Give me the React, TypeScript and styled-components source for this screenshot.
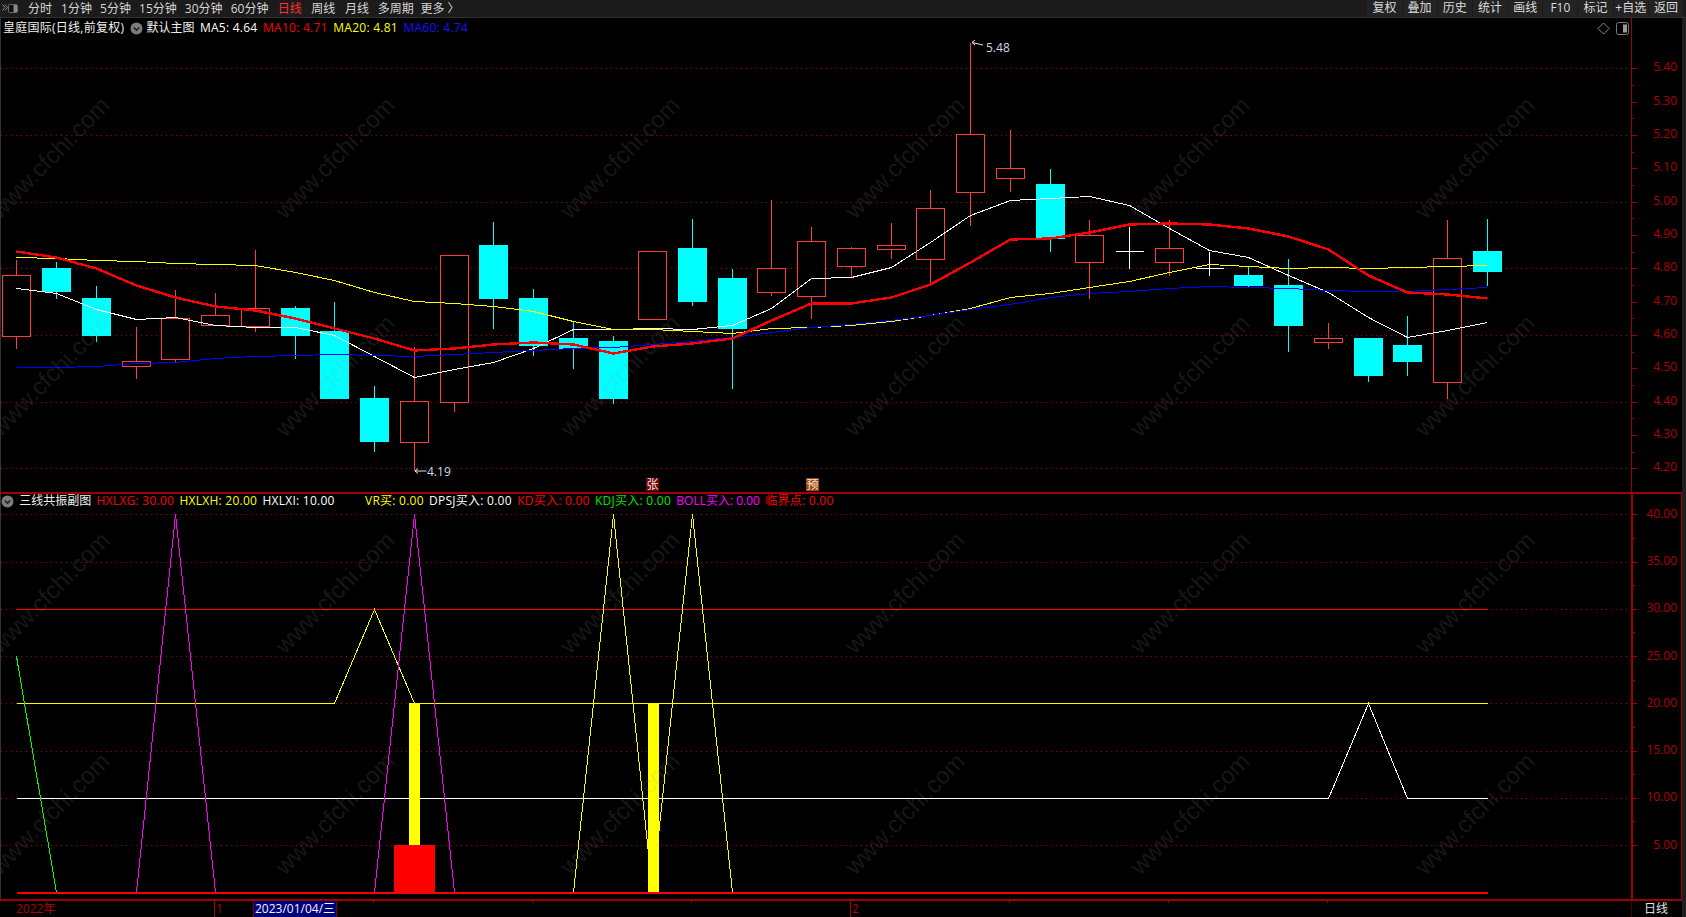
import React from "react";
import styled, { createGlobalStyle } from "styled-components";

const FONT = `"Open Sans","Noto Sans CJK SC",sans-serif`;

const Global = createGlobalStyle`
  html, body { margin: 0; padding: 0; background: #000; overflow: hidden; }
  #root { width: 1686px; height: 917px; }
`;

const Page = styled.div`
  width: 1686px;
  height: 917px;
  display: flex;
  flex-direction: column;
  background: #000;
  font: 12px/16px ${FONT};
  color: #e0e0e0;
  overflow: hidden;
`;

const TopBar = styled.header`
  height: 18px;
  box-sizing: border-box;
  display: flex;
  align-items: stretch;
  justify-content: space-between;
  background: #1b1b1b;
  border-bottom: 1px solid #303030;
`;
const Nav = styled.nav`
  display: flex;
  align-items: center;
  gap: 8.1px;
  padding-left: 2px;
`;
const NavLogo = styled.svg`
  width: 16px;
  height: 11px;
  margin-right: 1.9px;
`;
const NavItem = styled.span<{ $active?: boolean; $before?: number }>`
  color: ${(p) => (p.$active ? "#ff3030" : "#d6d6d6")};
  margin-left: ${(p) => p.$before ?? 0}px;
  white-space: nowrap;
`;
const Actions = styled.div`
  display: flex;
  padding-right: 3px;
`;
const ActionButton = styled.span`
  width: 34.2px;
  margin-left: 1px;
  background: #232323;
  color: #dcdcdc;
  text-align: center;
  white-space: nowrap;
  line-height: 16px;
`;

const Body = styled.div`
  flex: 1;
  display: flex;
  min-height: 0;
`;
const Column = styled.div`
  flex: 1;
  display: flex;
  flex-direction: column;
`;
const Gutter = styled.div`
  width: 4px;
  background: #1f1f1f;
`;

const MainPane = styled.section`
  height: 474px;
  display: flex;
`;
const SubPane = styled.section`
  height: 409px;
  box-sizing: border-box;
  display: flex;
  border-top: 2px solid #a00000;
  border-bottom: 2px solid #a00000;
  border-right: 1px solid #a00000;
`;
const Plot = styled.div`
  position: relative;
  width: 1631px;
  box-sizing: border-box;
  border-left: 1px solid #333;
  flex: none;
`;
const PlotSvg = styled.svg`
  display: block;
  width: 100%;
  height: 100%;
`;
const Axis = styled.div<{ $thick?: boolean }>`
  flex: 1;
  border-left: ${(p) => (p.$thick ? 2 : 1)}px solid #a00000;
`;
const AxisSvg = styled.svg`
  display: block;
  width: 100%;
  height: 100%;
`;
const AxisLabel = styled.text`
  fill: #b00000;
  font: 12px ${FONT};
  text-anchor: end;
  dominant-baseline: central;
`;
const Tick = styled.line`
  stroke: #a00000;
  stroke-width: 1;
  shape-rendering: crispEdges;
`;
const GridLine = styled.line`
  stroke: #a80000;
  stroke-width: 1;
  stroke-dasharray: 1 4;
  shape-rendering: crispEdges;
`;
const Wick = styled.line<{ $color: string }>`
  stroke: ${(p) => p.$color};
  stroke-width: 1;
  shape-rendering: crispEdges;
`;
const Body3 = styled.rect<{ $color: string; $solid?: boolean }>`
  stroke: ${(p) => p.$color};
  fill: ${(p) => (p.$solid ? p.$color : "#000")};
  stroke-width: 1;
  shape-rendering: crispEdges;
`;
const Curve = styled.polyline<{ $color: string; $width?: number }>`
  fill: none;
  stroke: ${(p) => p.$color};
  stroke-width: ${(p) => p.$width ?? 1};
  shape-rendering: crispEdges;
`;
const Solid = styled.rect<{ $color: string }>`
  fill: ${(p) => p.$color};
  shape-rendering: crispEdges;
`;
const Watermark = styled.text`
  fill: #9a9a9a;
  opacity: 0.14;
  font: 24px "Liberation Sans", sans-serif;
`;
const PriceNote = styled.text`
  fill: #cfd8e6;
  font: 12px ${FONT};
  dominant-baseline: central;
`;
const NoteArrow = styled.path`
  fill: none;
  stroke: #e8e8e8;
  stroke-width: 1;
`;
const SignalChip = styled.rect<{ $color: string }>`
  fill: ${(p) => p.$color};
`;
const SignalText = styled.text`
  fill: #ececec;
  font: 12px ${FONT};
  text-anchor: middle;
  dominant-baseline: central;
`;

const Legend = styled.div<{ $h: number; $left: number; $gap: number }>`
  position: absolute;
  left: ${(p) => p.$left}px;
  top: 0;
  height: ${(p) => p.$h}px;
  line-height: ${(p) => p.$h}px;
  display: flex;
  align-items: center;
  gap: ${(p) => p.$gap}px;
  white-space: nowrap;
`;
const LegendItem = styled.span<{ $color: string; $before?: number; $spaced?: boolean }>`
  color: ${(p) => p.$color};
  margin-left: ${(p) => p.$before ?? 0}px;
  letter-spacing: ${(p) => (p.$spaced ? 0.25 : 0)}px;
`;
const Chevron = styled.svg`
  width: 13px;
  height: 13px;
  flex: none;
`;
const PaneTools = styled.div`
  position: absolute;
  right: 2px;
  top: 4px;
  display: flex;
  align-items: center;
  gap: 6px;
`;
const ToolIcon = styled.svg`
  width: 13px;
  height: 13px;
  display: block;
`;

const TimeBar = styled.footer`
  flex: 1;
  display: flex;
`;
const TimeTrack = styled.div`
  position: relative;
  width: 1631px;
  flex: none;
`;
const TimeMark = styled.span<{ $x: number }>`
  position: absolute;
  left: ${(p) => p.$x}px;
  top: 0;
  color: #b00000;
  line-height: 15px;
  white-space: nowrap;
`;
const TimeTick = styled.i<{ $x: number; $major?: boolean }>`
  position: absolute;
  left: ${(p) => p.$x}px;
  top: 0;
  width: 1px;
  height: ${(p) => (p.$major ? 16 : 2)}px;
  background: #a00000;
`;
const Cursor = styled.span`
  position: absolute;
  left: 253px;
  top: 0;
  width: 84px;
  height: 16px;
  box-sizing: border-box;
  border-left: 1px solid #800000;
  border-right: 1px solid #800000;
  background: #00007c;
  color: #f4f4f4;
  line-height: 15px;
  padding-left: 1px;
  white-space: nowrap;
`;
const TimeCell = styled.div`
  flex: 1;
  border-left: 1px solid #4a0000;
  text-align: center;
  color: #e0e0e0;
  line-height: 16px;
  padding-right: 2px;
`;

const RED = "#ff3c3c";
const CYAN = "#00ffff";
const WHITE = "#ffffff";
const cx = (i: number) => Math.round(16.4 + 39.74 * i) + 0.5;
const snap = (v: number) => Math.round(v) + 0.5;

type C = [string, number, number, number, number];
// kind, wick top, body top, body bottom, wick bottom (page pixels)
const CANDLES: C[] = [
  ["r", 259, 275, 336, 348], ["c", 261, 268, 291, 298], ["c", 285, 298, 335, 341], ["r", 326, 361, 366, 378],
  ["r", 289, 318, 359, 361], ["r", 292, 315, 325, 325], ["r", 249, 308, 326, 331], ["c", 305, 308, 335, 358],
  ["c", 301, 331, 398, 398], ["c", 385, 398, 441, 451], ["r", 346, 401, 442, 470], ["r", 255, 255, 402, 411],
  ["c", 221, 245, 298, 328], ["c", 288, 298, 345, 355], ["c", 321, 338, 348, 368], ["c", 335, 341, 398, 403],
  ["r", 251, 251, 319, 319], ["c", 218, 248, 301, 305], ["c", 268, 278, 328, 388], ["r", 199, 268, 292, 295],
  ["r", 226, 241, 296, 318], ["r", 246, 248, 266, 277], ["r", 222, 245, 249, 258], ["r", 189, 208, 259, 284],
  ["r", 42, 134, 192, 225], ["r", 129, 168, 178, 191], ["c", 168, 184, 238, 251], ["r", 219, 235, 262, 298],
  ["w", 226, 251, 251, 268], ["r", 219, 248, 262, 275], ["w", 251, 268, 268, 275], ["c", 266, 275, 285, 287],
  ["c", 258, 285, 325, 351], ["r", 322, 338, 342, 348], ["c", 338, 338, 375, 381], ["c", 315, 345, 361, 375],
  ["r", 219, 258, 382, 398], ["c", 218, 251, 271, 285],
];

const MA5 = [288, 293, 309, 319, 317, 325, 327, 327, 335, 356, 377, 369, 362, 348, 329, 329, 328, 329, 325, 308, 278, 277, 267, 242, 215, 200, 198, 196, 205, 228, 250, 257, 275, 292, 317, 337, 330, 322];
const MA10 = [251, 257, 268, 285, 297, 306, 310, 318, 328, 338, 350, 348, 344, 342, 344, 353, 346, 343, 338, 320, 303, 303, 297, 284, 262, 239, 238, 232, 224, 223, 224, 228, 236, 249, 275, 292, 294, 298];
const MA20 = [257, 258, 260, 261, 263, 264, 265, 272, 280, 292, 301, 303, 306, 311, 321, 329, 329, 331, 333, 328, 327, 325, 321, 315, 308, 297, 293, 287, 281, 272, 264, 266, 268, 267, 268, 267, 266, 265];
const MA60 = [367, 367, 366, 363, 362, 358, 356, 355, 354, 355, 356, 354, 352, 350, 348, 347, 344, 341, 337, 332, 327, 324, 320, 315, 309, 304, 297, 293, 291, 288, 286, 287, 288, 290, 291, 291, 289, 287];

const points = (ys: number[]) => ys.map((y, i) => `${cx(i)},${snap(y)}`).join(" ");
const V = (v: number) => 892.3 - 9.45 * v;
const series = (vals: [number, number][]) => vals.map(([i, v]) => `${cx(i)},${snap(V(v))}`).join(" ");

const PRICE_TICKS = [5.4, 5.3, 5.2, 5.1, 5.0, 4.9, 4.8, 4.7, 4.6, 4.5, 4.4, 4.3, 4.2];
const P = (p: number) => 68.3 + (5.4 - p) * 333.3;
const MINOR = [5.35, 5.25, 5.15, 5.05, 4.95, 4.85, 4.75, 4.65, 4.55, 4.45, 4.35, 4.25];
const SUB_TICKS = [40, 35, 30, 25, 20, 15, 10, 5];

function WatermarkRow({ rows }: { rows: number[] }) {
  return (
    <>
      {rows.flatMap((endY) =>
        [0, 1, 2, 3, 4, 5].map((k) => {
          const x = 112 + 285 * k - 112;
          const y = endY + 118;
          return (
            <Watermark key={`${endY}-${k}`} x={x} y={y} transform={`rotate(-45.5 ${x} ${y})`}>
              www.cfchi.com
            </Watermark>
          );
        })
      )}
    </>
  );
}

function CircleChevron() {
  return (
    <Chevron viewBox="0 0 13 13">
      <circle cx="6.5" cy="6.5" r="6" fill="#7c7c7c" />
      <path d="M3.8 5.4 L6.5 8.2 L9.2 5.4" fill="none" stroke="#1c1c1c" strokeWidth="1.5" />
    </Chevron>
  );
}

const MAJOR_TICKS = [214, 850];
const MINOR_TICKS = [373, 532, 691, 1009, 1168, 1327];

export default function App() {
  return (
    <Page>
      <Global />
      <TopBar>
        <Nav>
          <NavLogo viewBox="0 0 16 11">
            <path d="M0.5 1.5 L3 4.5 L0.5 7.5 M3 1.5 L5.5 4.5 L3 7.5" fill="none" stroke="#8a8a8a" strokeWidth="1" />
            <rect x="6.5" y="1.5" width="9" height="8" rx="1" fill="#111" stroke="#6a6a6a" />
            <rect x="11.5" y="2" width="3.5" height="7" fill="#8a8a8a" />
          </NavLogo>
          <NavItem>分时</NavItem>
          <NavItem $before={1}>1分钟</NavItem>
          {["5分钟", "15分钟", "30分钟", "60分钟"].map((t) => (
            <NavItem key={t}>{t}</NavItem>
          ))}
          <NavItem $active $before={1.2}>日线</NavItem>
          <NavItem $before={1.5}>周线</NavItem>
          <NavItem $before={1.7}>月线</NavItem>
          <NavItem $before={0.5}>多周期</NavItem>
          <NavItem $before={-1.4}>更多 〉</NavItem>
        </Nav>
        <Actions>
          {["复权", "叠加", "历史", "统计", "画线", "F10", "标记", "+自选", "返回"].map((t) => (
            <ActionButton key={t}>{t}</ActionButton>
          ))}
        </Actions>
      </TopBar>
      <Body>
        <Column>
          <MainPane>
            <Plot>
              <PlotSvg viewBox="1 18 1630 474">
                {[5.4, 5.2, 5.0, 4.8, 4.6, 4.4, 4.2].map((p) => (
                  <GridLine key={p} x1="1" x2="1631" y1={snap(P(p))} y2={snap(P(p))} />
                ))}
                {CANDLES.map(([k, wt, bt, bb, wb], i) => {
                  const x = cx(i);
                  if (k === "w") {
                    return (
                      <g key={i}>
                        <Wick $color={WHITE} x1={x} x2={x} y1={wt + 0.5} y2={wb + 0.5} />
                        <Wick $color={WHITE} x1={x - 14} x2={x + 14} y1={bt + 0.5} y2={bt + 0.5} />
                      </g>
                    );
                  }
                  const color = k === "r" ? RED : CYAN;
                  return (
                    <g key={i}>
                      <Wick $color={color} x1={x} x2={x} y1={wt + 0.5} y2={wb + 0.5} />
                      <Body3 $color={color} $solid={k === "c"} x={x - 14} y={bt + 0.5} width={28} height={bb - bt} />
                    </g>
                  );
                })}
                <Curve $color="#ffffff" points={points(MA5)} />
                <Curve $color="#ffff00" points={points(MA20)} />
                <Curve $color="#0000ff" points={points(MA60)} />
                <Curve $color="#ff0000" $width={2.4} points={points(MA10)} />
                <NoteArrow d="M983 45 L972 42.5 M975 40 L972 42.5 L975 45" />
                <PriceNote x="986" y="47">5.48</PriceNote>
                <NoteArrow d="M426.5 471 L415 471 M418 468.5 L415 471 L418 473.5" />
                <PriceNote x="427" y="471">4.19</PriceNote>
                <SignalChip $color="#7a0000" x="646" y="478" width="13" height="13" />
                <SignalText x="652.5" y="484.5">张</SignalText>
                <SignalChip $color="#a8420a" x="806" y="478" width="13" height="13" />
                <SignalText x="812.5" y="484.5">预</SignalText>
                <WatermarkRow rows={[102, 320]} />
              </PlotSvg>
              <Legend $h={20} $left={2} $gap={5.6}>
                <LegendItem $color="#f0f0f0" $spaced>皇庭国际(日线,前复权)</LegendItem>
                <CircleChevron />
                <LegendItem $color="#f0f0f0" $before={-2}>默认主图</LegendItem>
                <LegendItem $color="#ffffff" $spaced>MA5: 4.64</LegendItem>
                <LegendItem $color="#ff0000" $spaced>MA10: 4.71</LegendItem>
                <LegendItem $color="#ffff00" $spaced>MA20: 4.81</LegendItem>
                <LegendItem $color="#1414ff" $spaced>MA60: 4.74</LegendItem>
              </Legend>
              <PaneTools>
                <ToolIcon viewBox="0 0 13 13">
                  <path d="M6.5 1 L12 6.5 L6.5 12 L1 6.5 Z" fill="none" stroke="#8c8c8c" strokeWidth="1" />
                </ToolIcon>
                <ToolIcon viewBox="0 0 13 13">
                  <rect x="0.5" y="0.5" width="12" height="12" rx="2" fill="#000" stroke="#7a7a7a" />
                  <rect x="7" y="2.5" width="4" height="8" fill="#9a9a9a" />
                </ToolIcon>
              </PaneTools>
            </Plot>
            <Axis>
              <AxisSvg viewBox="1632 18 50 474">
                {PRICE_TICKS.map((p) => (
                  <g key={p}>
                    <Tick x1="1632" x2="1637" y1={snap(P(p))} y2={snap(P(p))} />
                    <AxisLabel x="1677" y={P(p) - 1.5}>{p.toFixed(2)}</AxisLabel>
                  </g>
                ))}
                {MINOR.map((p) => (
                  <Tick key={p} x1="1632" x2="1634" y1={snap(P(p))} y2={snap(P(p))} />
                ))}
              </AxisSvg>
            </Axis>
          </MainPane>
          <SubPane>
            <Plot>
              <PlotSvg viewBox="1 494 1630 405">
                {[...SUB_TICKS].map((v) => (
                  <GridLine key={v} x1="1" x2="1631" y1={snap(V(v))} y2={snap(V(v))} />
                ))}
                <Solid $color="#ff0000" x="394" y="845" width="41" height="47" />
                <Curve $color="#ff0000" points={series([[0, 30], [37, 30]])} />
                <Curve $color="#ffff00" points={series([[0, 20], [8, 20], [9, 30], [10, 20], [37, 20]])} />
                <Curve $color="#ffffff" points={series([[0, 10], [33, 10], [34, 20], [35, 10], [37, 10]])} />
                <Curve $color="#00ff00" points={series([[0, 25], [1, 0]])} />
                <Curve $color="#ff00ff" points={series([[3, 0], [4, 40], [5, 0]])} />
                <Curve $color="#ff00ff" points={series([[9, 0], [10, 40], [11, 0]])} />
                <Curve $color="#ffff00" points={series([[14, 0], [15, 40], [16, 0], [17, 40], [18, 0]])} />
                <Solid $color="#ffff00" x="409" y="703" width="11" height="142" />
                <Solid $color="#ffff00" x="648" y="703" width="11" height="189" />
                <Curve $color="#ff0000" $width={2} points={series([[0, 0], [37, 0]])} />
                <WatermarkRow rows={[537, 758]} />
              </PlotSvg>
              <Legend $h={14} $left={0} $gap={5.3}>
                <CircleChevron />
                <LegendItem $color="#f0f0f0">三线共振副图</LegendItem>
                <LegendItem $color="#ff0000" $spaced>HXLXG: 30.00</LegendItem>
                <LegendItem $color="#ffff00" $spaced>HXLXH: 20.00</LegendItem>
                <LegendItem $color="#ffffff" $spaced>HXLXI: 10.00</LegendItem>
                <LegendItem $color="#ffff00" $before={25} $spaced>VR买: 0.00</LegendItem>
                <LegendItem $color="#ffffff" $spaced>DPSJ买入: 0.00</LegendItem>
                <LegendItem $color="#ff0000" $spaced>KD买入: 0.00</LegendItem>
                <LegendItem $color="#00e600" $spaced>KDJ买入: 0.00</LegendItem>
                <LegendItem $color="#ff00ff">BOLL买入: 0.00</LegendItem>
                <LegendItem $color="#ff0000" $spaced>临界点: 0.00</LegendItem>
              </Legend>
            </Plot>
            <Axis $thick>
              <AxisSvg viewBox="1633 494 48 405">
                {SUB_TICKS.map((v) => (
                  <g key={v}>
                    <Tick x1="1633" x2="1637" y1={snap(V(v))} y2={snap(V(v))} />
                    <AxisLabel x="1677" y={V(v) - 1}>{v.toFixed(2)}</AxisLabel>
                  </g>
                ))}
                {[37.5, 32.5, 27.5, 22.5, 17.5, 12.5, 7.5].map((v) => (
                  <Tick key={v} x1="1633" x2="1635" y1={snap(V(v))} y2={snap(V(v))} />
                ))}
              </AxisSvg>
            </Axis>
          </SubPane>
          <TimeBar>
            <TimeTrack>
              {MAJOR_TICKS.map((x) => (
                <TimeTick key={x} $x={x} $major />
              ))}
              {MINOR_TICKS.map((x) => (
                <TimeTick key={x} $x={x} />
              ))}
              <TimeMark $x={16}>2022年</TimeMark>
              <TimeMark $x={216}>1</TimeMark>
              <TimeMark $x={852}>2</TimeMark>
              <Cursor>2023/01/04/三</Cursor>
            </TimeTrack>
            <TimeCell>日线</TimeCell>
          </TimeBar>
        </Column>
        <Gutter />
      </Body>
    </Page>
  );
}
